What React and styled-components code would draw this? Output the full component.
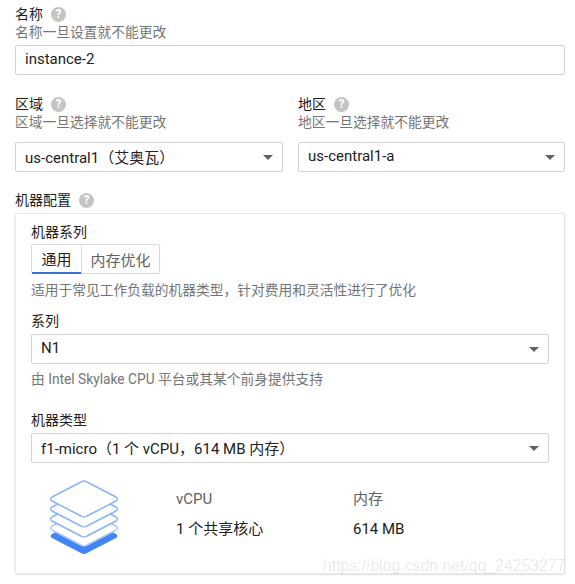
import React from "react"
import styled, { createGlobalStyle } from "styled-components"

const GlobalStyle = createGlobalStyle`
  html, body {
    margin: 0;
    padding: 0;
    background: #fff;
  }
  body {
    font-family: Roboto, "Noto Sans CJK SC", sans-serif;
    font-size: 14px;
    color: #212121;
  }
`

const Page = styled.div`
  position: relative;
  width: 575px;
  height: 584px;
  padding: 5px 10px 0 15px;
  box-sizing: border-box;
  overflow: hidden;
`

const Label = styled.div`
  display: flex;
  align-items: center;
  gap: 8px;
  height: 18px;
  margin-top: ${(p) => p.$top || 0}px;
  line-height: 18px;
  font-size: 14px;
  color: #212121;
`

const Hint = styled.div`
  height: 18px;
  line-height: 18px;
  font-size: 13.75px;
  color: #757575;
  margin-top: ${(p) => p.$top || 0}px;
`

const HelpDot = styled.span`
  display: inline-flex;
  align-items: center;
  justify-content: center;
  width: 15px;
  height: 15px;
  border-radius: 50%;
  background: #c4c4c4;
  color: #fff;
  font-size: 12px;
  font-weight: 700;
  line-height: 15px;
`

const Field = styled.div`
  display: flex;
  align-items: center;
  justify-content: space-between;
  box-sizing: border-box;
  height: 30px;
  margin-top: ${(p) => p.$top || 0}px;
  padding: 0 9px 2px 9px;
  border: 1px solid #d2d2d2;
  border-radius: 2px;
  background: #fff;
  font-size: 15px;
  color: #212121;
`

const Caret = styled.span`
  width: 0;
  height: 0;
  margin-top: 2px;
  border-left: 5px solid transparent;
  border-right: 5px solid transparent;
  border-top: 5px solid #616161;
`

const TwoCols = styled.div`
  display: grid;
  grid-template-columns: 268px 267px;
  column-gap: 15px;
  margin-top: 20px;
`

const Section = styled.div`
  margin-top: 19px;
`

const Card = styled.div`
  box-sizing: border-box;
  height: 361px;
  margin-top: 4px;
  padding: 9px 15px 0 15px;
  border: 1px solid #e6e6e6;
  border-radius: 2px;
  box-shadow: 0 1px 2px rgba(0, 0, 0, 0.12);
`

const Toggle = styled.div`
  display: inline-flex;
  height: 30px;
  margin-top: 3px;
  box-sizing: border-box;
  border: 1px solid #dadada;
  border-radius: 2px;
  vertical-align: top;
`

const ToggleItem = styled.div`
  display: flex;
  align-items: center;
  justify-content: center;
  width: ${(p) => p.$width}px;
  box-sizing: border-box;
  font-size: 15px;
  color: ${(p) => (p.$active ? "#212121" : "#616161")};
  border-bottom: ${(p) => (p.$active ? "2px solid #3b6fd4" : "none")};
  margin-bottom: ${(p) => (p.$active ? "-1px" : "0")};
  & + & {
    border-left: 1px solid #dadada;
  }
`

const Specs = styled.div`
  display: flex;
  margin-top: 16px;
`

const IconCell = styled.div`
  width: 145px;
  padding: 1px 0 0 18px;
  box-sizing: border-box;
`

const SpecCol = styled.div`
  width: 177px;
  padding-top: 11px;
`

const SpecName = styled.div`
  height: 18px;
  line-height: 18px;
  color: #616161;
  font-size: 15px;
`

const SpecValue = styled.div`
  height: 18px;
  line-height: 18px;
  margin-top: 12px;
  color: #212121;
  font-size: 15px;
`

const Watermark = styled.div`
  position: absolute;
  left: 323px;
  top: 557px;
  font-family: "Liberation Sans", sans-serif;
  font-size: 15.8px;
  line-height: 18px;
  color: rgba(0, 0, 0, 0.1);
  white-space: nowrap;
`

const Help = () => <HelpDot>?</HelpDot>

const Select = ({ value, top }) => (
  <Field $top={top}>
    {value}
    <Caret />
  </Field>
)

// rounded diamond, cy is the y of its side tips
const slab = (cy) =>
  `M3 ${cy - 2} L32 ${cy - 17} Q35 ${cy - 19} 38 ${cy - 17} L67 ${cy - 2} Q70 ${cy} 67 ${cy + 2} L38 ${cy + 17} Q35 ${cy + 19} 32 ${cy + 17} L3 ${cy + 2} Q0 ${cy} 3 ${cy - 2} Z`

const StackIcon = () => (
  <svg width="70" height="76" viewBox="0 0 70 76" fill="none">
    <path d={slab(56)} fill="#4285f4" />
    <path d={slab(48)} fill="#fff" stroke="#aecbfa" strokeWidth="1.5" />
    <path d={slab(39)} fill="#fff" stroke="#8ab4f8" strokeWidth="1.5" />
    <path d={slab(29)} fill="#fff" stroke="#8ab4f8" strokeWidth="1.5" />
    <path d={slab(19)} fill="#fff" stroke="#8ab4f8" strokeWidth="1.5" />
  </svg>
)

export default function App() {
  return (
    <Page>
      <GlobalStyle />
      <Label>
        名称 <Help />
      </Label>
      <Hint>名称一旦设置就不能更改</Hint>
      <Field $top={4}>instance-2</Field>

      <TwoCols>
        <div>
          <Label>
            区域 <Help />
          </Label>
          <Hint>区域一旦选择就不能更改</Hint>
          <Select value="us-central1（艾奥瓦）" top={11} />
        </div>
        <div>
          <Label>
            地区 <Help />
          </Label>
          <Hint>地区一旦选择就不能更改</Hint>
          <Select value="us-central1-a" top={11} />
        </div>
      </TwoCols>

      <Section>
        <Label>
          机器配置 <Help />
        </Label>
        <Card>
          <Label>机器系列</Label>
          <Toggle>
            <ToggleItem $active $width={49}>通用</ToggleItem>
            <ToggleItem $width={78}>内存优化</ToggleItem>
          </Toggle>
          <Hint $top={7}>适用于常见工作负载的机器类型，针对费用和灵活性进行了优化</Hint>
          <Label $top={13}>系列</Label>
          <Select value="N1" top={4} />
          <Hint $top={6}>由 Intel Skylake CPU 平台或其某个前身提供支持</Hint>
          <Label $top={23}>机器类型</Label>
          <Select value="f1-micro（1 个 vCPU，614 MB 内存）" top={4} />
          <Specs>
            <IconCell>
              <StackIcon />
            </IconCell>
            <SpecCol>
              <SpecName>vCPU</SpecName>
              <SpecValue>1 个共享核心</SpecValue>
            </SpecCol>
            <SpecCol>
              <SpecName>内存</SpecName>
              <SpecValue>614 MB</SpecValue>
            </SpecCol>
          </Specs>
        </Card>
      </Section>
      <Watermark>https://blog.csdn.net/qq_24253277</Watermark>
    </Page>
  )
}
